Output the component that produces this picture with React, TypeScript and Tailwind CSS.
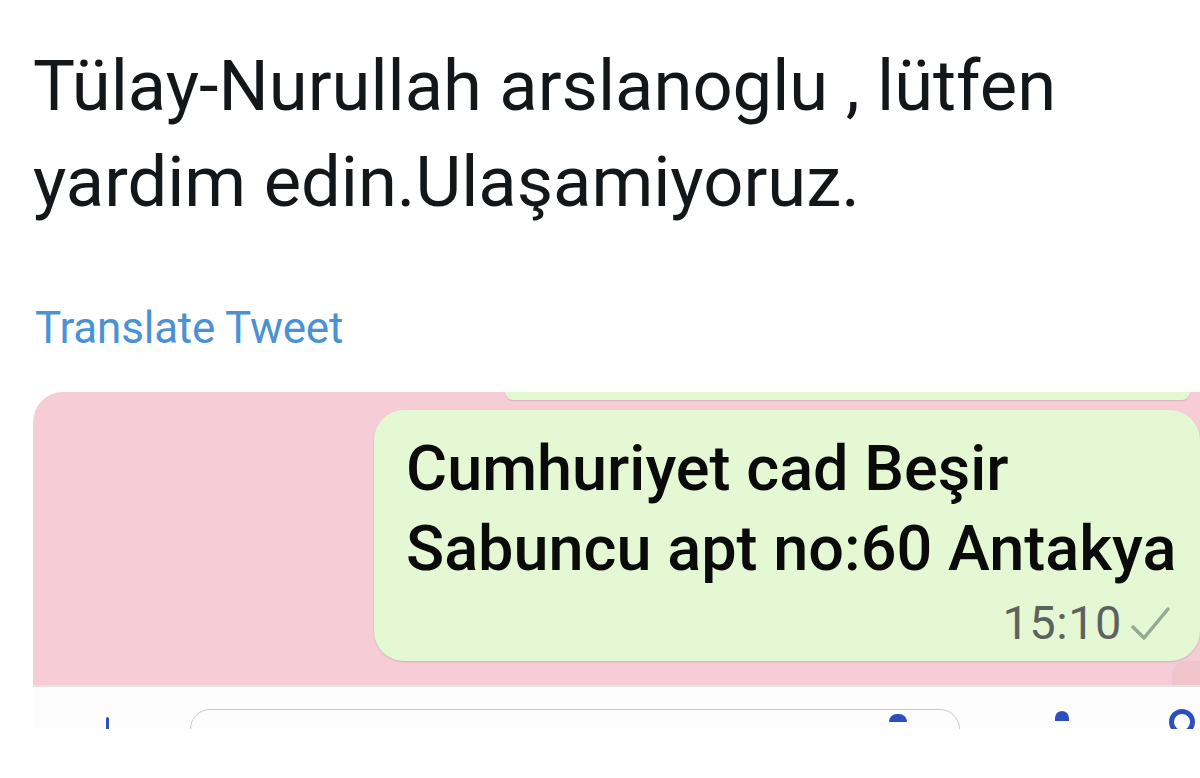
export default function App() {
  return (
    <div className="w-[1200px] h-[778px] bg-white overflow-hidden" style={{ fontFamily: "Roboto, 'Liberation Sans', sans-serif" }}>
      <div className="pl-[33px] pt-[38px]">
        <p className="text-[70.5px] leading-[96px] text-[#14171a]">
          Tülay-Nurullah arslanoglu , lütfen
          <br />
          yardim edin.Ulaşamiyoruz.
        </p>
        <p className="mt-[73px] pl-[2px] text-[44px] leading-[50px] text-[#4a92d4] tracking-[-0.2px]">Translate Tweet</p>
      </div>

      <div className="mt-[39px] ml-[33px]">
        <div className="h-[293px] bg-[#f6cdd7] rounded-tl-[30px] overflow-hidden flex flex-col relative">
          <div className="flex justify-end pr-[10px]">
            <div className="w-[685px] h-[8px] bg-[#e4f7d3] rounded-b-[16px] shadow-[0_1px_1px_rgba(0,0,0,0.12)]" />
          </div>
          <div className="flex justify-end mt-[10px]">
            <div className="w-[826px] h-[251px] bg-[#e5f8d4] rounded-[30px] shadow-[0_1px_2px_rgba(0,0,0,0.15)] pl-[32px] pt-[19px]">
              <p className="text-[63px] leading-[80px] font-medium text-[#0a0a0a]">
                Cumhuriyet cad Beşir
                <br />
                Sabuncu apt no:60 Antakya
              </p>
              <div className="flex justify-end items-center gap-[8px] pr-[30px] mt-[12px]">
                <span className="text-[47px] leading-[44px] text-[#5e625f] tracking-[0.5px]">15:10</span>
                <svg width="40" height="36" viewBox="0 0 40 36" fill="none">
                  <path d="M3 22 L14 33 L38 4" stroke="#93aa94" strokeWidth="3.5" strokeLinecap="round" strokeLinejoin="round" />
                </svg>
              </div>
            </div>
          </div>
          <div className="absolute right-0 bottom-0 w-[28px] h-[24px] bg-[#ecc0c4] rounded-tl-[14px] opacity-70" />
        </div>
        <div className="h-[2px] bg-[#e6e2e4]" />
        <div className="h-[42px] bg-[#fdfdfd] overflow-hidden flex items-start pt-[22px]">
          <div className="w-[3px] h-[14px] mt-[8px] ml-[73px] bg-[#2c4ec0] rounded-full" />
          <div className="ml-[81px] w-[770px] h-[40px] border border-[#c9c9c9] rounded-[26px] flex justify-end pr-[52px] pt-[4px]">
            <div className="w-[18px] h-[8px] bg-[#2c4ec0] rounded-t-full" />
          </div>
          <div className="ml-[95px] w-[14px] h-[10px] mt-[2px] bg-[#2c4ec0] rounded-t-full" />
          <div className="ml-[100px] w-[26px] h-[26px] border-[5px] border-[#2c4ec0] rounded-full" />
        </div>
      </div>
    </div>
  );
}
